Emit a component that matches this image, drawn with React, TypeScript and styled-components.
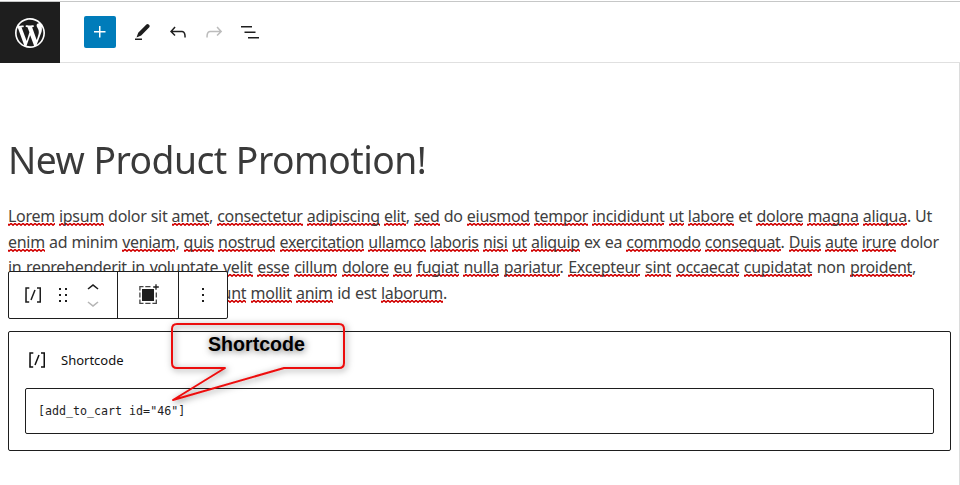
import React from "react";
import styled, { createGlobalStyle } from "styled-components";

const GlobalStyle = createGlobalStyle`
  * { box-sizing: border-box; }
  body { margin: 0; background: #fff; overflow: hidden; }
`;

const Editor = styled.div`
  display: flex;
  flex-direction: column;
  width: 960px;
  height: 485px;
  padding-top: 1px;
  overflow: hidden;
  background: #fff;
  font-family: "Noto Sans", "Open Sans", sans-serif;
`;

const Header = styled.header`
  display: flex;
  flex: none;
  height: 62px;
  border-top: 1px solid #c6c7c7;
  border-bottom: 1px solid #e0e0e0;
`;

const SiteLogo = styled.div`
  display: flex;
  align-items: center;
  justify-content: center;
  width: 60px;
  height: 61px;
  background: #1e1e1e;
  color: #fff;
`;

const HeaderTools = styled.div`
  display: flex;
  align-items: center;
  gap: 4px;
  padding-left: 24px;
`;

const ToolButton = styled.button<{ $primary?: boolean; $disabled?: boolean }>`
  display: flex;
  align-items: center;
  justify-content: center;
  width: 32px;
  height: 32px;
  padding: 0;
  border: 0;
  border-radius: 2px;
  margin-right: ${(p) => (p.$primary ? "6px" : "0")};
  background: ${(p) => (p.$primary ? "#007cba" : "transparent")};
  color: ${(p) => (p.$primary ? "#fff" : p.$disabled ? "#bcbcbc" : "#1e1e1e")};
`;

const Canvas = styled.main`
  flex: 1;
  padding: 72px 9px 0 8px;
  border-right: 1px solid #dcdcdc;
`;

const Title = styled.h1`
  height: 48px;
  margin: 0;
  font-size: 38.7px;
  font-weight: 400;
  line-height: 48px;
  letter-spacing: -0.55px;
  white-space: nowrap;
  color: #3a3a3a;
  transform: scaleX(0.963);
  transform-origin: 0 50%;
`;

const Paragraph = styled.div`
  margin-top: 21px;
  font-size: 16px;
  line-height: 25.5px;
  letter-spacing: -0.3px;
  color: #404040;
`;

const Line = styled.div<{ $width: number }>`
  width: ${(p) => p.$width}px;
  height: 25.5px;
  white-space: nowrap;
  display: flex;
  justify-content: space-between;
`;

const squiggle =
  "data:image/svg+xml,%3Csvg xmlns='http://www.w3.org/2000/svg' width='4' height='3'%3E%3Cpath d='M-1 .3L1 2.3L3 .3L5 2.3' fill='none' stroke='%23d00000' stroke-width='1.4'/%3E%3C/svg%3E";

const Misspelled = styled.span`
  background: url("${squiggle}") repeat-x left 0 top 18px;
`;

const ToolbarLayer = styled.div`
  position: absolute;
  left: 8px;
  top: 271px;
  display: flex;
  width: 220px;
  height: 48px;
  border: 1px solid #1e1e1e;
  border-radius: 2px;
  background: #fff;
  color: #1e1e1e;
`;

const ToolbarGroup = styled.div<{ $width: number }>`
  display: flex;
  align-items: center;
  justify-content: center;
  width: ${(p) => p.$width}px;
  & + & { border-left: 1px solid #1e1e1e; }
`;

const MainGroup = styled(ToolbarGroup)`
  justify-content: flex-start;
  padding-left: 12px;
`;

const DragHandle = styled.span`
  display: flex;
  margin-left: 6px;
`;

const Movers = styled.span`
  display: flex;
  flex-direction: column;
  margin-left: 6px;
  svg { display: block; }
  svg + svg { margin-top: -9px; color: #b5b5b5; }
`;

const ShortcodeBlock = styled.section`
  width: 943px;
  height: 120px;
  margin-top: 25px;
  padding: 16px;
  border: 1px solid #1e1e1e;
  border-radius: 2px;
`;

const BlockLabel = styled.div`
  display: flex;
  align-items: center;
  gap: 12px;
  height: 24px;
  font-size: 13px;
  color: #111;
`;

const CodeField = styled.div`
  display: flex;
  align-items: center;
  width: 909px;
  height: 46px;
  margin-top: 16px;
  padding-left: 12px;
  border: 1px solid #1e1e1e;
  border-radius: 2px;
  font-family: "DejaVu Sans Mono", monospace;
  font-size: 11.65px;
  color: #1e1e1e;
`;

const Callout = styled.div`
  position: absolute;
  left: 160px;
  top: 312px;
  width: 200px;
  height: 100px;
  svg { display: block; overflow: visible; }
`;

const CalloutText = styled.span`
  position: absolute;
  left: 48px;
  top: 20px;
  font: bold 19.6px/24px "Liberation Sans", Arial, sans-serif;
  color: #000;
  text-shadow: 1px 1px 7px rgba(0, 0, 0, 0.6);
`;

const icons = {
  plus: "M11 12.5V17.5H12.5V12.5H17.5V11H12.5V6H11V11H6V12.5H11Z",
  edit: "M16.4 4.4Q17.5 3.4 18.7 4.5L19.2 5Q20.3 6.1 19.3 7.3L11.2 15.6L6.5 17.4L8.2 12.7ZM5 18.6h7V20H5Z",
  undo: "M18.3 11.7c-.6-.6-1.4-.9-2.3-.9H6.7l2.9-3.3-1.1-1-4.5 5L8.5 16l1-1-2.7-2.7H16c.5 0 .9.2 1.3.5 1 1 1 3.4 1 4.5v.3h1.5v-.2c0-1.5 0-4.3-1.5-5.7z",
  redo: "M15.6 6.5l-1.1 1 2.9 3.3H8c-.9 0-1.7.3-2.3.9-1.4 1.5-1.4 4.2-1.4 5.6v.2h1.5v-.3c0-1.1 0-3.5 1-4.5.3-.3.7-.5 1.3-.5h9.2L14.5 15l1.1 1.1 4.6-4.6-4.6-5z",
  list: "M3 6h11v1.5H3V6Zm3.5 5.5h11V13h-11v-1.5ZM21 17H10v1.5h11V17Z",
  shortcode:
    "M16 4.2v1.5h2.5v12.5H16v1.5h4V4.2h-4zM4.2 19.8h4v-1.5H5.8V5.8h2.5V4.2h-4l-.1 15.6zm5.1-3.1l1.4.6 4-10-1.4-.6-4 10z",
  drag: "M8 7h2V5H8v2zm0 6h2v-2H8v2zm0 6h2v-2H8v2zm6-14v2h2V5h-2zm0 8h2v-2h-2v2zm0 6h2v-2h-2v2z",
  up: "M6.5 12.4L12 8l5.5 4.4-.9 1.2L12 10l-4.5 3.6-1-1.2z",
  down: "M17.5 11.6L12 16l-5.5-4.4.9-1.2L12 14l4.5-3.6 1 1.2z",
  more: "M13 19h-2v-2h2v2zm0-6h-2v-2h2v2zm0-6h-2V5h2v2z",
};

const Icon = ({ name }: { name: keyof typeof icons }) => (
  <svg width="24" height="24" viewBox="0 0 24 24" fill="currentColor" aria-hidden>
    <path d={icons[name]} />
  </svg>
);

const WordPressLogo = () => (
  <svg width="36" height="36" viewBox="-2 -2 24 24" fill="currentColor" aria-hidden>
    <path d="M20 10c0-5.51-4.49-10-10-10C4.48 0 0 4.49 0 10c0 5.52 4.48 10 10 10 5.51 0 10-4.48 10-10zM7.78 15.37L4.37 6.22c.55-.02 1.17-.08 1.17-.08.5-.06.44-1.13-.06-1.11 0 0-1.45.11-2.37.11-.18 0-.37 0-.58-.01C4.12 2.69 6.87 1.11 10 1.11c2.33 0 4.45.87 6.05 2.34-.68-.11-1.65.39-1.65 1.58 0 .74.45 1.36.9 2.1.35.61.55 1.36.55 2.46 0 1.49-1.4 5-1.4 5l-3.03-8.37c.54-.02.82-.17.82-.17.5-.05.44-1.25-.06-1.22 0 0-1.44.12-2.38.12-.87 0-2.33-.12-2.33-.12-.5-.03-.56 1.2-.06 1.22l.92.08 1.26 3.41zM17.41 10c.24-.64.74-1.87.43-4.25.7 1.29 1.05 2.71 1.05 4.25 0 3.29-1.73 6.24-4.4 7.78.97-2.59 1.94-5.2 2.92-7.78zM6.1 18.09C3.12 16.65 1.11 13.53 1.11 10c0-1.3.23-2.48.72-3.59C3.25 10.3 4.67 14.2 6.1 18.09zm4.03-6.63l2.58 6.98c-.86.29-1.76.45-2.71.45-.79 0-1.57-.11-2.29-.33.81-2.38 1.62-4.74 2.42-7.1z" />
  </svg>
);

const GroupIcon = () => (
  <svg width="24" height="24" viewBox="0 1 24 24" fill="none" stroke="currentColor" aria-hidden>
    <rect x="6" y="7" width="12" height="12" fill="currentColor" stroke="none" />
    <path
      d="M3.9 8.6V4.7H7.5M9.3 4.7h5.2M3.9 10.6v4.8M3.9 17.4v3.9H7.5M9.3 21.3h5.2M16.4 21.3h3.9V17.4M20.3 10.6v4.8"
      strokeWidth="1.3"
      stroke="#444"
    />
    <path d="M20 2.2v5.6M17.2 5h5.6" strokeWidth="1.3" />
  </svg>
);

// An asterisk in front of a word marks it as flagged by the spell checker.
const lines = [
  { width: 924, text: "*Lorem *ipsum dolor sit *amet, *consectetur *adipiscing *elit, *sed do *eiusmod *tempor *incididunt *ut *labore et *dolore *magna *aliqua. Ut" },
  { width: 931, text: "*enim ad minim *veniam, *quis *nostrud *exercitation *ullamco *laboris *nisi *ut *aliquip ex ea *commodo *consequat. *Duis *aute *irure dolor" },
  { width: 908, text: "in *reprehenderit in *voluptate *velit *esse *cillum *dolore *eu *fugiat *nulla *pariatur. *Excepteur *sint *occaecat *cupidatat non *proident," },
  { width: 439, text: "sunt in culpa qui officia *deserunt *mollit *anim id est *laborum." },
];

const Word = ({ token }: { token: string }) => {
  if (!token.startsWith("*")) return <span>{token}</span>;
  const [, word, tail] = token.match(/^\*(\w+)(\W*)$/)!;
  return (
    <span>
      <Misspelled>{word}</Misspelled>
      {tail}
    </span>
  );
};

export default function App() {
  return (
    <>
      <GlobalStyle />
      <Editor>
        <Header>
          <SiteLogo><WordPressLogo /></SiteLogo>
          <HeaderTools>
            <ToolButton $primary aria-label="Add block"><Icon name="plus" /></ToolButton>
            <ToolButton aria-label="Tools"><Icon name="edit" /></ToolButton>
            <ToolButton aria-label="Undo"><Icon name="undo" /></ToolButton>
            <ToolButton $disabled aria-label="Redo"><Icon name="redo" /></ToolButton>
            <ToolButton aria-label="Document overview"><Icon name="list" /></ToolButton>
          </HeaderTools>
        </Header>
        <Canvas>
          <Title>New Product Promotion!</Title>
          <Paragraph>
            {lines.map((line) => (
              <Line key={line.text} $width={line.width}>
                {line.text.split(" ").map((token, i) => (
                  <Word key={i} token={token} />
                ))}
              </Line>
            ))}
          </Paragraph>
          <ShortcodeBlock>
            <BlockLabel><Icon name="shortcode" />Shortcode</BlockLabel>
            <CodeField>[add_to_cart id="46"]</CodeField>
          </ShortcodeBlock>
        </Canvas>
      </Editor>
      <ToolbarLayer>
        <MainGroup $width={108}>
          <Icon name="shortcode" />
          <DragHandle><Icon name="drag" /></DragHandle>
          <Movers>
            <Icon name="up" />
            <Icon name="down" />
          </Movers>
        </MainGroup>
        <ToolbarGroup $width={61}><GroupIcon /></ToolbarGroup>
        <ToolbarGroup $width={49}><Icon name="more" /></ToolbarGroup>
      </ToolbarLayer>
      <Callout>
        <svg width="200" height="100" viewBox="0 0 200 100" fill="none">
          <defs>
            <filter id="callout-shadow" x="-20%" y="-20%" width="140%" height="150%">
              <feDropShadow dx="1.5" dy="1.5" stdDeviation="3" floodColor="#000" floodOpacity="0.5" />
            </filter>
          </defs>
          <path
            d="M17 12H179Q184 12 184 17V51Q184 56 179 56H124L13 88L65 56H17Q12 56 12 51V17Q12 12 17 12Z"
            stroke="#ec0d0d"
            strokeWidth="2"
            strokeLinejoin="round"
            filter="url(#callout-shadow)"
          />
        </svg>
        <CalloutText>Shortcode</CalloutText>
      </Callout>
    </>
  );
}
